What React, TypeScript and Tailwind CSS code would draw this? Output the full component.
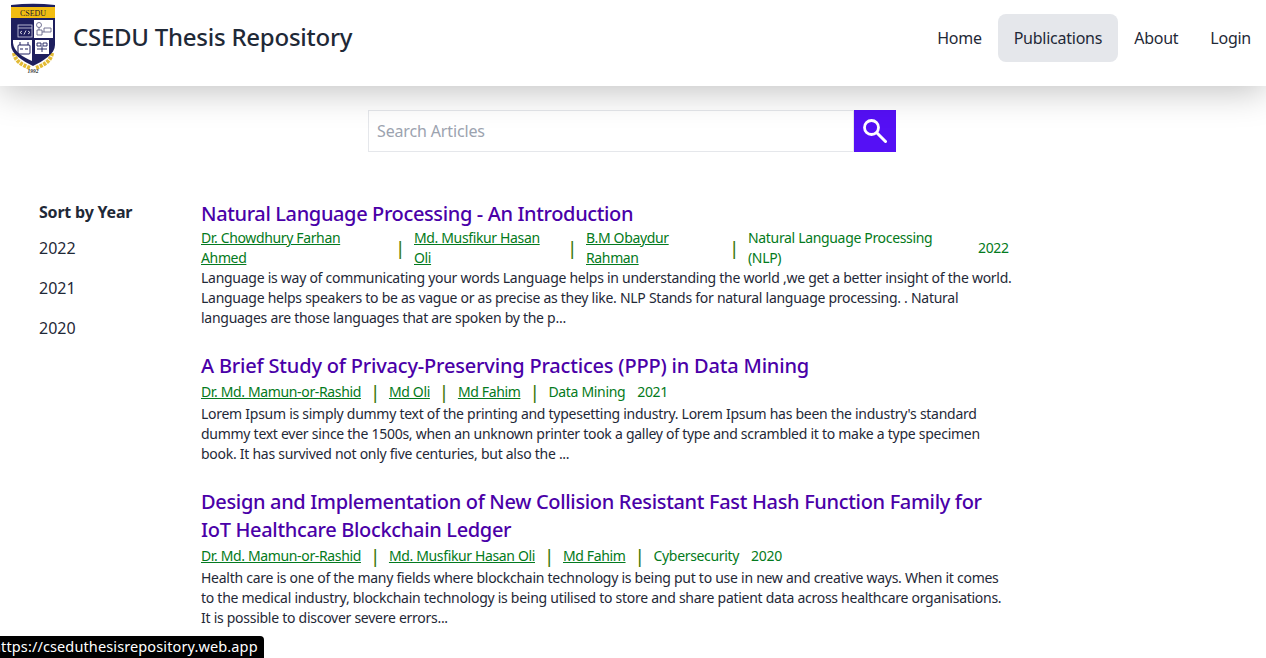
const years = ['2022', '2021', '2020']

function Logo() {
  return (
    <svg width="46" height="70" viewBox="0 0 46 70" className="block">
      {/* wreath */}
      <path d="M4 50 C5 58 12 62 20 65" fill="none" stroke="#e3bb35" strokeWidth="4" strokeDasharray="3 1" />
      <path d="M42 50 C41 58 34 62 26 65" fill="none" stroke="#e3bb35" strokeWidth="4" strokeDasharray="3 1" />
      {/* shield */}
      <path d="M1 2 Q23 -0.500 45 2 V42 C45 51 33 58 23 63 C13 58 1 51 1 42 Z" fill="#1e1f5e" />
      <rect x="1" y="4" width="44" height="11" fill="#f2bd12" />
      <text x="23" y="13" textAnchor="middle" fontSize="8" fontFamily="Liberation Serif, serif" fill="#1a1a2e">CSEDU</text>
      {/* top left: code window */}
      <rect x="8" y="22" width="14" height="12" fill="#1e1f5e" stroke="#d8d8e8" strokeWidth="0.8" />
      <path d="M8 25 H22" stroke="#d8d8e8" strokeWidth="0.8" />
      <path d="M12 28 l-2 1.500 2 1.500 M18 28 l2 1.500 -2 1.500 M16 27.500 l-2 4" fill="none" stroke="#fff" strokeWidth="0.8" />
      {/* top right: flowchart */}
      <rect x="24" y="17" width="19" height="18" fill="#fff" />
      <circle cx="29" cy="22" r="2.500" fill="none" stroke="#55557e" strokeWidth="0.8" />
      <path d="M27 27 h5 v5 h-5 z M34 25 h7 v4 h-7 z M32 29 h2 M29 24.500 v2.500" fill="none" stroke="#55557e" strokeWidth="0.8" />
      {/* bottom left: robot */}
      <path d="M3 37 H22 V58 C13 54 4 49 3 40 Z" fill="#fff" />
      <rect x="8" y="42" width="12" height="9" rx="1" fill="none" stroke="#1e1f5e" strokeWidth="1" />
      <path d="M10 39 v3 M18 39 v3 M10 46 h3 M15 46 h3" stroke="#1e1f5e" strokeWidth="1" />
      {/* bottom right: diagram */}
      <rect x="25" y="37" width="14" height="14" fill="#fff" />
      <path d="M27 40 h4 v3 h-4 z M33 40 h4 v3 h-4 z M27 46 h10 M32 43 v6" fill="none" stroke="#1e1f5e" strokeWidth="0.9" />
      <text x="23" y="69.500" textAnchor="middle" fontSize="5.500" fontStyle="italic" fontWeight="700" fontFamily="Liberation Serif, serif" fill="#333">1992</text>
    </svg>
  )
}

function SearchIcon() {
  return (
    <svg width="24" height="24" viewBox="0 0 24 24" fill="none" stroke="currentColor" strokeLinecap="round">
      <circle cx="8.500" cy="8.500" r="7" strokeWidth="2.800" />
      <path d="M13.800 13.800 L22.500 22.500" strokeWidth="3" />
    </svg>
  )
}

function Sep() {
  return <span className="flex w-[4px] shrink-0 justify-center text-lg leading-5 font-medium text-[#3f7a10]">|</span>
}

function Author({ name, className }: { name: string; className?: string }) {
  return <a href="#" className={`underline tracking-[-0.36px] text-[#047a20] ${className ?? ''}`}>{name}</a>
}

export default function App() {
  return (
    <div className="relative h-screen overflow-hidden bg-white font-['Noto_Sans',sans-serif] text-[#1f2937]">
      {/* Header */}
      <header className="relative flex h-[86px] items-center justify-between bg-white pb-[10px] shadow-[0_5px_35px_rgba(0,0,0,0.25)]">
        <div className="flex items-center pl-[10px]">
          <Logo />
          <h1 className="ml-[17px] pb-[2px] text-2xl font-medium tracking-[-0.25px]">CSEDU Thesis Repository</h1>
        </div>
        <nav className="-mr-px flex items-center tracking-[-0.25px]">
          <a href="#" className="px-4 py-3">Home</a>
          <a href="#" className="rounded-lg bg-[#e5e7eb] px-4 py-3">Publications</a>
          <a href="#" className="px-4 py-3">About</a>
          <a href="#" className="px-4 py-3">Login</a>
        </nav>
      </header>

      {/* Search */}
      <div className="mt-6 flex justify-center pr-[2px]">
        <div className="flex h-[42px] w-[528px]">
          <input
            placeholder="Search Articles"
            className="min-w-0 flex-1 border border-[#e5e7eb] px-2 tracking-[-0.15px] placeholder:text-[#9ca3af] focus:outline-none"
          />
          <button className="flex w-[42px] items-center justify-center bg-[#5510f5] text-white">
            <SearchIcon />
          </button>
        </div>
      </div>

      <div className="mt-[48px] flex pl-[39px]">
        {/* Sidebar */}
        <aside className="w-[162px] shrink-0">
          <h2 className="font-bold leading-6 tracking-[-0.2px]">Sort by Year</h2>
          <ul className="mt-[12px] space-y-4">
            {years.map((y) => (
              <li key={y} className="leading-6">{y}</li>
            ))}
          </ul>
        </aside>

        {/* Articles */}
        <main className="w-[812px] text-sm leading-5 tracking-[-0.27px]">
          <article>
            <h3 className="text-xl font-medium leading-7 tracking-[-0.37px] text-[#4a00a8]">Natural Language Processing - An Introduction</h3>
            <div className="flex items-center gap-3 tracking-[-0.33px] text-[#047a20]">
              <Author name="Dr. Chowdhury Farhan Ahmed" className="w-[185px] shrink-0" />
              <Sep />
              <Author name="Md. Musfikur Hasan Oli" className="w-[144px] shrink-0" />
              <Sep />
              <Author name="B.M Obaydur Rahman" className="w-[134px] shrink-0" />
              <Sep />
              <span className="w-[218px] shrink-0">Natural Language Processing (NLP)</span>
              <span>2022</span>
            </div>
            <p>
              Language is way of communicating your words Language helps in understanding the world ,we get a better insight of the world.<br />
              Language helps speakers to be as vague or as precise as they like. NLP Stands for natural language processing. . Natural<br />
              languages are those languages that are spoken by the p...
            </p>
          </article>

          <article className="mt-6">
            <h3 className="text-xl font-medium leading-7 tracking-[-0.19px] text-[#4a00a8]">A Brief Study of Privacy-Preserving Practices (PPP) in Data Mining</h3>
            <div className="mt-[2px] flex items-center gap-3 tracking-[-0.33px] text-[#047a20]">
              <Author name="Dr. Md. Mamun-or-Rashid" />
              <Sep />
              <Author name="Md Oli" />
              <Sep />
              <Author name="Md Fahim" />
              <Sep />
              <span>Data Mining</span>
              <span>2021</span>
            </div>
            <p className="mt-[2px]">
              Lorem Ipsum is simply dummy text of the printing and typesetting industry. Lorem Ipsum has been the industry's standard<br />
              dummy text ever since the 1500s, when an unknown printer took a galley of type and scrambled it to make a type specimen<br />
              book. It has survived not only five centuries, but also the ...
            </p>
          </article>

          <article className="mt-6">
            <h3 className="text-xl font-medium leading-7 tracking-[-0.33px] text-[#4a00a8]">
              Design and Implementation of New Collision Resistant Fast Hash Function Family for<br />
              IoT Healthcare Blockchain Ledger
            </h3>
            <div className="mt-[2px] flex items-center gap-3 tracking-[-0.33px] text-[#047a20]">
              <Author name="Dr. Md. Mamun-or-Rashid" />
              <Sep />
              <Author name="Md. Musfikur Hasan Oli" />
              <Sep />
              <Author name="Md Fahim" />
              <Sep />
              <span>Cybersecurity</span>
              <span>2020</span>
            </div>
            <p className="mt-[2px]">
              Health care is one of the many fields where blockchain technology is being put to use in new and creative ways. When it comes<br />
              to the medical industry, blockchain technology is being utilised to store and share patient data across healthcare organisations.<br />
              It is possible to discover severe errors...
            </p>
          </article>
        </main>
      </div>

      {/* Browser status bubble */}
      <div className="absolute bottom-0 left-0 flex h-[22px] w-[264px] items-center overflow-hidden rounded-tr-[4px] bg-black text-[14.5px] tracking-[0.12px] whitespace-nowrap text-white">
        <span className="-ml-[8px]">https://cseduthesisrepository.web.app</span>
      </div>
    </div>
  )
}
